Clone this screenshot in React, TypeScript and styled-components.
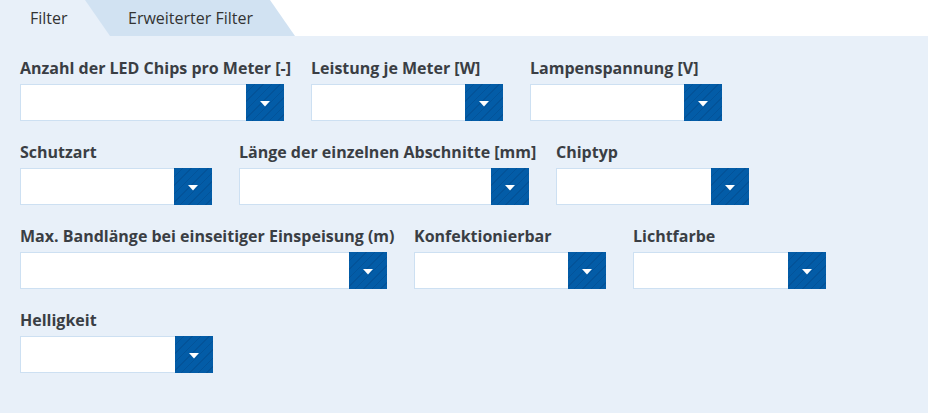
import styled, { createGlobalStyle } from 'styled-components'

const GlobalStyle = createGlobalStyle`
  html, body {
    margin: 0;
    padding: 0;
    background: #ffffff;
    font-family: 'Open Sans', 'Liberation Sans', sans-serif;
  }
`

const Page = styled.div`
  width: 928px;
  height: 413px;
  overflow: hidden;
  background: #ffffff;
`

const TabBar = styled.div`
  display: flex;
  height: 36px;
`

const Tab = styled.div<{ $active?: boolean }>`
  position: relative;
  display: flex;
  align-items: center;
  height: 36px;
  font-size: 16px;
  color: #333333;
  background: ${(p) => (p.$active ? '#e8f0f9' : '#d1e2f2')};
  z-index: ${(p) => (p.$active ? 2 : 1)};
  width: ${(p) => (p.$active ? '110px' : '210px')};
  padding-left: ${(p) => (p.$active ? '30px' : '43px')};
  margin-left: ${(p) => (p.$active ? '0' : '-25px')};
  box-sizing: border-box;
  clip-path: polygon(0 0, calc(100% - 25px) 0, 100% 100%, 0 100%);
`

const Panel = styled.div`
  background: #e8f0f9;
  padding: 22px 20px 40px;
  min-height: 377px;
  box-sizing: border-box;
`

const Row = styled.div`
  display: flex;
  gap: 27px;
  margin-bottom: 21px;
`

const Field = styled.div<{ $w: number }>`
  display: flex;
  flex-direction: column;
  width: ${(p) => p.$w}px;
`

const Label = styled.label`
  font-size: 16px;
  font-weight: 700;
  line-height: 20px;
  color: #3a3e44;
  white-space: nowrap;
  margin-bottom: 6px;
`

const Select = styled.div`
  display: flex;
  height: 37px;
  box-sizing: border-box;
  border: 1px solid #cde0f2;
  background: #ffffff;
`

const SelectValue = styled.div`
  flex: 1;
`

const SelectButton = styled.div`
  width: 38px;
  margin: -1px -1px -1px 0;
  display: flex;
  align-items: center;
  justify-content: center;
  padding-top: 3px;
  box-sizing: border-box;
  background-color: #035ca7;
  background-image: repeating-linear-gradient(
    135deg,
    rgba(0, 35, 80, 0.16) 0px,
    rgba(0, 35, 80, 0.16) 1px,
    transparent 1px,
    transparent 6px
  );
`

const Caret = () => (
  <svg width="10" height="6" viewBox="0 0 10 6">
    <path d="M0 0 L10 0 L5 5.5 Z" fill="#ffffff" />
  </svg>
)

const rows: { label: string; w: number }[][] = [
  [
    { label: 'Anzahl der LED Chips pro Meter [-]', w: 264 },
    { label: 'Leistung je Meter [W]', w: 192 },
    { label: 'Lampenspannung [V]', w: 192 },
  ],
  [
    { label: 'Schutzart', w: 192 },
    { label: 'Länge der einzelnen Abschnitte [mm]', w: 290 },
    { label: 'Chiptyp', w: 193 },
  ],
  [
    { label: 'Max. Bandlänge bei einseitiger Einspeisung (m)', w: 367 },
    { label: 'Konfektionierbar', w: 192 },
    { label: 'Lichtfarbe', w: 193 },
  ],
  [{ label: 'Helligkeit', w: 193 }],
]

export default function App() {
  return (
    <Page>
      <GlobalStyle />
      <TabBar>
        <Tab $active>Filter</Tab>
        <Tab>Erweiterter Filter</Tab>
      </TabBar>
      <Panel>
        {rows.map((row, i) => (
          <Row key={i}>
            {row.map((f) => (
              <Field key={f.label} $w={f.w}>
                <Label>{f.label}</Label>
                <Select>
                  <SelectValue />
                  <SelectButton>
                    <Caret />
                  </SelectButton>
                </Select>
              </Field>
            ))}
          </Row>
        ))}
      </Panel>
    </Page>
  )
}
